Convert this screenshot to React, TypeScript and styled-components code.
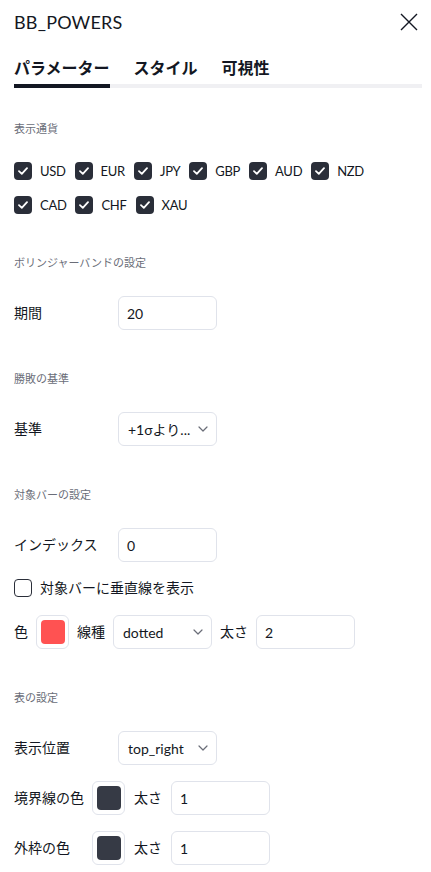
import styled, { createGlobalStyle } from 'styled-components'

const GlobalStyle = createGlobalStyle`
  body {
    margin: 0;
    background: #ffffff;
    color: #131722;
    font-family: Lato, "Noto Sans CJK JP", sans-serif;
    overflow: hidden;
  }
`

const CURRENCIES = [
  ['USD', 'EUR', 'JPY', 'GBP', 'AUD', 'NZD'],
  ['CAD', 'CHF', 'XAU'],
]

const CheckIcon = () => (
  <svg width="10" height="8" viewBox="0 0 10 8" fill="none">
    <path d="M1 4.2 L3.8 6.8 L9 1.2" stroke="#fff" strokeWidth="1.8" strokeLinecap="round" strokeLinejoin="round" />
  </svg>
)

const Chevron = () => (
  <svg width="10" height="6" viewBox="0 0 10 6" fill="none">
    <path d="M1 1 L5 5 L9 1" stroke="#6a6d78" strokeWidth="1.2" strokeLinecap="round" strokeLinejoin="round" />
  </svg>
)

const Check = ({ label, checked = true, wide }: { label: string; checked?: boolean; wide?: boolean }) => (
  <CheckItem $wide={wide}>
    <Box $checked={checked}>{checked && <CheckIcon />}</Box>
    <span>{label}</span>
  </CheckItem>
)

const Select = ({ value }: { value: string }) => (
  <SelectBox>
    <span>{value}</span>
    <Chevron />
  </SelectBox>
)

const Swatch = ({ color }: { color: string }) => (
  <SwatchBox>
    <SwatchFill $color={color} />
  </SwatchBox>
)

const App = () => {
  return (
    <>
      <GlobalStyle />
      <Dialog>
        <Header>
          <Title>BB_POWERS</Title>
          <CloseButton>
            <svg width="18" height="18" viewBox="0 0 18 18" fill="none">
              <path d="M1 1 L17 17 M17 1 L1 17" stroke="#131722" strokeWidth="1.4" />
            </svg>
          </CloseButton>
        </Header>
        <Tabs>
          <Tab $active>パラメーター</Tab>
          <Tab>スタイル</Tab>
          <Tab>可視性</Tab>
        </Tabs>

        <Content>
          <Section>
            <SectionLabel>表示通貨</SectionLabel>
            <Rows>
              {CURRENCIES.map((row, i) => (
                <CheckRow key={i}>
                  {row.map((c) => (
                    <Check key={c} label={c} />
                  ))}
                </CheckRow>
              ))}
            </Rows>
          </Section>

          <Section>
            <SectionLabel>ボリンジャーバンドの設定</SectionLabel>
            <Rows>
              <FieldRow>
                <FieldLabel $width={95}>期間</FieldLabel>
                <Input>20</Input>
              </FieldRow>
            </Rows>
          </Section>

          <Section>
            <SectionLabel>勝敗の基準</SectionLabel>
            <Rows>
              <FieldRow>
                <FieldLabel $width={95}>基準</FieldLabel>
                <Select value="+1σより..." />
              </FieldRow>
            </Rows>
          </Section>

          <Section>
            <SectionLabel>対象バーの設定</SectionLabel>
            <Rows>
              <FieldRow>
                <FieldLabel $width={95}>インデックス</FieldLabel>
                <Input>0</Input>
              </FieldRow>
              <SingleCheckRow>
                <Check label="対象バーに垂直線を表示" checked={false} wide />
              </SingleCheckRow>
              <FieldRow $tight>
                <FieldLabel>色</FieldLabel>
                <Swatch color="#ff5252" />
                <FieldLabel>線種</FieldLabel>
                <Select value="dotted" />
                <FieldLabel>太さ</FieldLabel>
                <Input>2</Input>
              </FieldRow>
            </Rows>
          </Section>

          <Section>
            <SectionLabel>表の設定</SectionLabel>
            <Rows>
              <FieldRow>
                <FieldLabel $width={95}>表示位置</FieldLabel>
                <Select value="top_right" />
              </FieldRow>
              <FieldRow>
                <FieldLabel $width={69}>境界線の色</FieldLabel>
                <Swatch color="#363a45" />
                <FieldLabel>太さ</FieldLabel>
                <Input>1</Input>
              </FieldRow>
              <FieldRow>
                <FieldLabel $width={69}>外枠の色</FieldLabel>
                <Swatch color="#363a45" />
                <FieldLabel>太さ</FieldLabel>
                <Input>1</Input>
              </FieldRow>
            </Rows>
          </Section>
        </Content>
      </Dialog>
    </>
  )
}

const Dialog = styled.div`
  width: 431px;
  height: 872px;
  box-sizing: border-box;
  padding: 0 9px 0 14px;
`

const Header = styled.div`
  height: 44px;
  display: flex;
  align-items: center;
  justify-content: space-between;
`

const Title = styled.div`
  font-size: 18px;
  line-height: 24px;
  font-weight: 400;
  letter-spacing: 0.2px;
`

const CloseButton = styled.div`
  width: 18px;
  height: 18px;
  margin-right: 4px;
  display: flex;
`

const Tabs = styled.div`
  display: flex;
  gap: 24px;
  border-bottom: 4px solid #f0f0f3;
  height: 40px;
`

const Tab = styled.div<{ $active?: boolean }>`
  font-size: 16px;
  font-weight: 700;
  line-height: 24px;
  padding-top: 11px;
  height: 29px;
  border-bottom: 4px solid ${(p) => (p.$active ? '#131722' : 'transparent')};
  margin-bottom: -4px;
  font-family: "Noto Sans CJK JP", sans-serif;
`

const Content = styled.div`
  padding-top: 33px;
  display: flex;
  flex-direction: column;
  gap: 41px;
`

const Section = styled.div`
  display: flex;
  flex-direction: column;
  gap: 25px;
`

const SectionLabel = styled.div`
  font-size: 11px;
  line-height: 16px;
  color: #6a6d78;
`

const Rows = styled.div`
  display: flex;
  flex-direction: column;
  gap: 16px;
`

const CheckRow = styled.div`
  display: flex;
  align-items: center;
  gap: 9px;
  height: 18px;
`

const SingleCheckRow = styled.div`
  display: flex;
  align-items: center;
  height: 20px;
  margin-bottom: 1px;
`

const CheckItem = styled.label<{ $wide?: boolean }>`
  display: flex;
  align-items: center;
  gap: 8px;
  font-size: ${(p) => (p.$wide ? '14px' : '13px')};
  letter-spacing: ${(p) => (p.$wide ? '0' : '-0.3px')};
  line-height: 18px;
  color: #131722;
`

const Box = styled.span<{ $checked: boolean }>`
  width: 18px;
  height: 18px;
  box-sizing: border-box;
  border-radius: 4px;
  display: flex;
  align-items: center;
  justify-content: center;
  background: ${(p) => (p.$checked ? '#2a2e39' : '#ffffff')};
  border: ${(p) => (p.$checked ? 'none' : '1.5px solid #2a2e39')};
`

const FieldRow = styled.div<{ $tight?: boolean }>`
  display: flex;
  align-items: center;
  gap: ${(p) => (p.$tight ? '8px' : '9px')};
  height: 34px;
`

const FieldLabel = styled.div<{ $width?: number }>`
  font-size: 14px;
  line-height: 20px;
  white-space: nowrap;
  color: #131722;
  flex-shrink: 0;
  ${(p) => (p.$width ? `width: ${p.$width}px;` : '')}
`

const Input = styled.div`
  width: 99px;
  height: 34px;
  box-sizing: border-box;
  border: 1px solid #e0e3eb;
  border-radius: 6px;
  padding: 0 8px;
  display: flex;
  align-items: center;
  font-size: 14px;
`

const SelectBox = styled.div`
  width: 99px;
  height: 34px;
  box-sizing: border-box;
  border: 1px solid #e0e3eb;
  border-radius: 6px;
  padding: 0 8px 0 9px;
  display: flex;
  align-items: center;
  justify-content: space-between;
  font-size: 14px;
  white-space: nowrap;
`

const SwatchBox = styled.div`
  width: 33px;
  height: 34px;
  flex-shrink: 0;
  box-sizing: border-box;
  border: 1px solid #e0e3eb;
  border-radius: 6px;
  display: flex;
  align-items: center;
  justify-content: center;
`

const SwatchFill = styled.div<{ $color: string }>`
  width: 24px;
  height: 24px;
  border-radius: 4px;
  background: ${(p) => p.$color};
`

export default App
